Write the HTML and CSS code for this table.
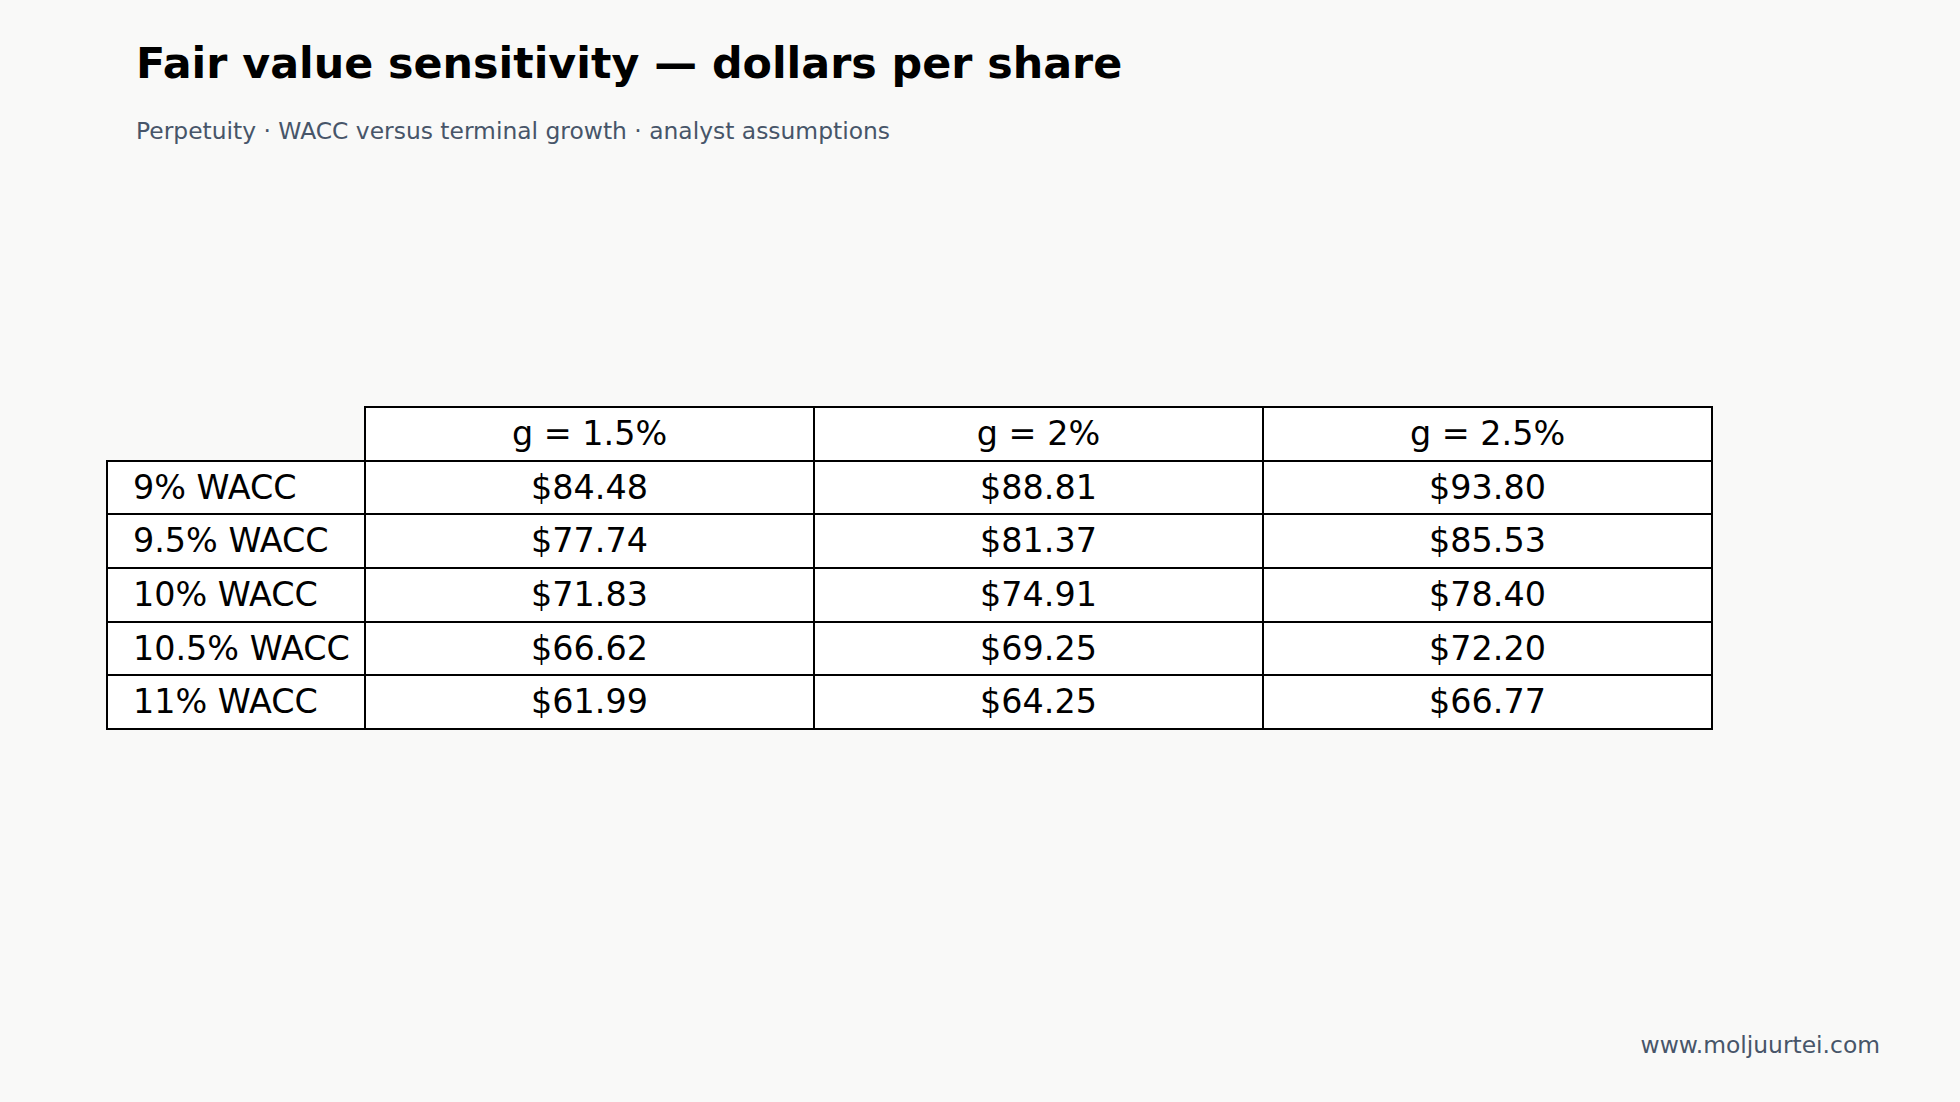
FILE: index.html
```html
<!DOCTYPE html>
<html lang="en">
<head>
<meta charset="utf-8">
<title>Fair value sensitivity</title>
<link rel="stylesheet" href="styles.css">
</head>
<body>
<div class="page">
  <header class="head">
    <h1 class="title">Fair value sensitivity — dollars per share</h1>
    <p class="subtitle">Perpetuity · WACC versus terminal growth · analyst assumptions</p>
  </header>
  <main class="main">
    <table class="grid">
      <thead>
        <tr>
          <th class="corner"></th>
          <th>g = 1.5%</th>
          <th>g = 2%</th>
          <th>g = 2.5%</th>
        </tr>
      </thead>
      <tbody>
        <tr><td class="label">9% WACC</td><td>$84.48</td><td>$88.81</td><td>$93.80</td></tr>
        <tr><td class="label">9.5% WACC</td><td>$77.74</td><td>$81.37</td><td>$85.53</td></tr>
        <tr><td class="label">10% WACC</td><td>$71.83</td><td>$74.91</td><td>$78.40</td></tr>
        <tr><td class="label">10.5% WACC</td><td>$66.62</td><td>$69.25</td><td>$72.20</td></tr>
        <tr><td class="label">11% WACC</td><td>$61.99</td><td>$64.25</td><td>$66.77</td></tr>
      </tbody>
    </table>
  </main>
  <footer class="foot">www.moljuurtei.com</footer>
</div>
</body>
</html>
```
FILE: styles.css
```css
html, body {
  margin: 0;
  padding: 0;
  background: #f9f9f8;
}

.page {
  height: 1102px;
  display: flex;
  flex-direction: column;
  font-family: "DejaVu Sans", "Liberation Sans", sans-serif;
  color: #000;
}

.head {
  padding: 38px 0 0 136px;
}

.title {
  margin: 0;
  font-size: 42.8px;
  font-weight: bold;
  line-height: normal;
  color: #000;
}

.subtitle {
  margin: 29px 0 0;
  font-size: 23.4px;
  line-height: normal;
  color: #475569;
}

.main {
  flex: 1;
  padding: 261px 0 0 106px;
}

.grid {
  border-collapse: collapse;
  font-size: 33.4px;
}

.grid th,
.grid td {
  border: 2px solid #000;
  background: #fff;
  padding: 0;
  height: 51.67px;
  line-height: 1;
  font-weight: normal;
  text-align: center;
  width: 447px;
  vertical-align: middle;
}

.grid th.corner {
  border: none;
  background: transparent;
  width: 256px;
}

.grid td.label {
  text-align: left;
  padding-left: 25px;
  width: 231px;
}

.foot {
  padding: 0 80px 43px 0;
  text-align: right;
  font-size: 23.4px;
  line-height: normal;
  color: #475569;
}
```
